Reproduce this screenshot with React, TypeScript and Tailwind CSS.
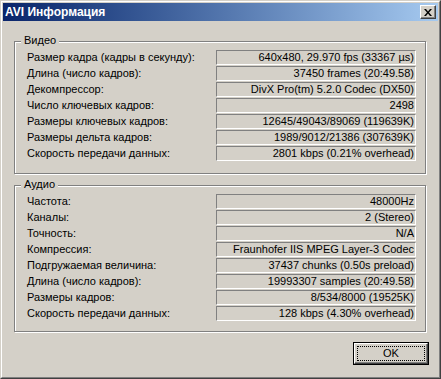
import React from "react"

const video: [string, string][] = [
  ["Размер кадра (кадры в секунду):", "640x480, 29.970 fps (33367 µs)"],
  ["Длина (число кадров):", "37450 frames (20:49.58)"],
  ["Декомпрессор:", "DivX Pro(tm) 5.2.0 Codec (DX50)"],
  ["Число ключевых кадров:", "2498"],
  ["Размеры ключевых кадров:", "12645/49043/89069 (119639K)"],
  ["Размеры дельта кадров:", "1989/9012/21386 (307639K)"],
  ["Скорость передачи данных:", "2801 kbps (0.21% overhead)"],
]

const audio: [string, string][] = [
  ["Частота:", "48000Hz"],
  ["Каналы:", "2 (Stereo)"],
  ["Точность:", "N/A"],
  ["Компрессия:", "Fraunhofer IIS MPEG Layer-3 Codec"],
  ["Подгружаемая величина:", "37437 chunks (0.50s preload)"],
  ["Длина (число кадров):", "19993307 samples (20:49.58)"],
  ["Размеры кадров:", "8/534/8000 (19525K)"],
  ["Скорость передачи данных:", "128 kbps (4.30% overhead)"],
]

function Group({ title, rows, className }: { title: string; rows: [string, string][]; className: string }) {
  return (
    <div
      className={`relative ml-[11px] w-[412px] border border-[#808080] shadow-[inset_1px_1px_0_#ffffff,1px_1px_0_#ffffff] pl-[12px] pr-[9px] pt-[8px] ${className}`}
    >
      <span className="absolute left-[6px] top-[-8px] bg-[#d4d0c8] px-[3px] leading-[13px]">{title}</span>
      <div className="flex flex-col gap-px">
        {rows.map(([label, value]) => (
          <div key={label + value} className="flex h-[15px] items-center">
            <div className="w-[189px] leading-[15px]">{label}</div>
            <div className="h-[15px] w-[200px] border-t border-l border-t-[#808080] border-l-[#808080] border-b border-r border-b-white border-r-white pr-[1px] text-right leading-[13px]">
              {value}
            </div>
          </div>
        ))}
      </div>
    </div>
  )
}

export default function App() {
  return (
    <div className="h-[379px] w-[441px] bg-[#d4d0c8] font-['Liberation_Sans',Arial,sans-serif] text-[11px] text-black">
      <div className="h-full border border-t-[#d4d0c8] border-l-[#d4d0c8] border-r-[#404040] border-b-[#404040]">
        <div className="flex h-full flex-col border border-t-white border-l-white border-r-[#808080] border-b-[#808080] p-px">
          <div className="flex h-[18px] items-center bg-gradient-to-r from-[#0a246a] to-[#a6caf0] pl-[2px] pr-[2px]">
            <span className="flex-1 text-[12px] font-bold leading-[18px] text-white">AVI Информация</span>
            <div className="flex h-[14px] w-[16px] items-center justify-center border border-t-white border-l-white border-r-[#404040] border-b-[#404040] bg-[#d4d0c8] shadow-[inset_-1px_-1px_0_#808080]">
              <svg width="8" height="7" viewBox="0 0 8 7">
                <path d="M0 0h2l2 2.5L6 0h2L5 3.5 8 7H6L4 4.5 2 7H0l3-3.5z" fill="#000" />
              </svg>
            </div>
          </div>

          <Group title="Видео" rows={video} className="mt-[20px] h-[133px]" />
          <Group title="Аудио" rows={audio} className="mt-[11px] h-[147px]" />

          <div className="mt-[10px] flex justify-end pr-[9px]">
            <button className="h-[23px] w-[76px] border border-black bg-[#d4d0c8] p-0">
              <div className="h-full w-full border border-t-white border-l-white border-r-[#404040] border-b-[#404040] p-[2px] shadow-[inset_-1px_-1px_0_#808080]">
                <div className="flex h-full w-full items-center justify-center border border-dotted border-black leading-none">
                  OK
                </div>
              </div>
            </button>
          </div>
        </div>
      </div>
    </div>
  )
}
